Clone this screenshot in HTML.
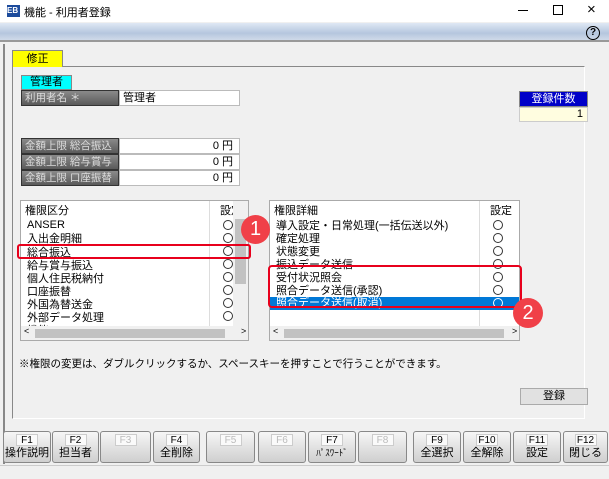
<!DOCTYPE html><html><head><meta charset="utf-8"><style>
*{box-sizing:border-box;margin:0;padding:0}
body{width:609px;height:479px;background:#f0f0f0;font-family:"Liberation Sans","Noto Sans CJK JP",sans-serif;font-size:11px;position:relative;overflow:hidden;color:#000}
.a{position:absolute}
.lbl{background:linear-gradient(#8a8a8a,#5a5a5a);color:#ddd;border:1px solid #333;padding-left:3px;line-height:14px;font-size:10.5px;white-space:nowrap;overflow:hidden}
.val{background:#fff;border:1px solid #bbb;line-height:14px;text-align:right;padding-right:6px}
.row{position:absolute;left:2px;height:13px;line-height:13px;font-size:11px;padding-left:4px;white-space:nowrap}
.fb{position:absolute;top:431px;height:32px;border:1px solid #888;border-radius:3px;background:linear-gradient(#f6f6f6,#cfcfcf);text-align:center;font-size:11px}
.fb i{display:block;font-style:normal;margin:2px auto 0;width:22px;height:12px;line-height:12px;background:#fafafa;border:1px solid #ccc;font-size:10px}
.fb b{font-weight:normal;display:block;line-height:14px}
.dis i{color:#bbb}
.o{position:absolute;width:10px;height:10px;border:1px solid #333;border-radius:50%}
</style></head><body>
<div class="a" style="left:0;top:0;width:609px;height:22px;background:#fff"></div>
<div class="a" style="left:7px;top:5px;width:13px;height:12px;background:#1c4b9c;color:#fff;font-size:8px;line-height:12px;font-weight:bold">EB</div>
<div class="a" style="left:24px;top:4px;font-size:11px">機能 - 利用者登録</div>
<div class="a" style="left:518px;top:10px;width:10px;height:1px;background:#000"></div>
<div class="a" style="left:553px;top:5px;width:10px;height:10px;border:1px solid #000"></div>
<div class="a" style="left:587px;top:1px;font-size:15px">×</div>
<div class="a" style="left:0;top:23px;width:609px;height:19px;background:linear-gradient(#dfe8f4,#b5c6de 60%,#cfdae9);border-bottom:2px solid #999"></div>
<div class="a" style="left:586px;top:26px;width:14px;height:14px;border:1.5px solid #000;border-radius:50%;font-size:10px;line-height:11px;text-align:center;font-weight:bold">?</div>
<div class="a" style="left:3px;top:44px;width:2px;height:420px;background:#888"></div>
<div class="a" style="left:12px;top:66px;width:573px;height:353px;border-top:1px solid #888;border-left:1px solid #888;border-right:1px solid #fff;border-bottom:1px solid #fff"></div>
<div class="a" style="left:12px;top:50px;width:51px;height:17px;background:#ff0;border:1px solid #888;border-bottom:none;text-align:center;line-height:16px">修正</div>
<div class="a" style="left:21px;top:75px;width:51px;height:15px;background:#0ff;border:1px solid #888;text-align:center;line-height:13px">管理者</div>
<div class="a lbl" style="left:21px;top:90px;width:98px;height:16px">利用者名 ＊</div>
<div class="a val" style="left:119px;top:90px;width:121px;height:16px;text-align:left;padding-left:3px">管理者</div>
<div class="a lbl" style="left:21px;top:138px;width:98px;height:16px">金額上限 総合振込</div>
<div class="a val" style="left:119px;top:138px;width:121px;height:16px">0 円</div>
<div class="a lbl" style="left:21px;top:154px;width:98px;height:16px">金額上限 給与賞与</div>
<div class="a val" style="left:119px;top:154px;width:121px;height:16px">0 円</div>
<div class="a lbl" style="left:21px;top:170px;width:98px;height:16px">金額上限 口座振替</div>
<div class="a val" style="left:119px;top:170px;width:121px;height:16px">0 円</div>
<div class="a" style="left:519px;top:91px;width:69px;height:16px;background:#0000c8;border:1px solid #888;color:#fff;text-align:center;line-height:14px">登録件数</div>
<div class="a" style="left:519px;top:107px;width:69px;height:15px;background:#fffde0;border:1px solid #ccc;text-align:right;padding-right:4px;line-height:13px">1</div>

<!-- left list -->
<div class="a" style="left:20px;top:200px;width:229px;height:141px;background:#fff;border:1px solid #aaa;overflow:hidden">
<div class="a" style="left:188px;top:0;width:1px;height:125px;background:#ddd"></div>
<div class="a" style="left:4px;top:1px">権限区分</div><div class="a" style="left:199px;top:1px">設定</div>
<div class="row" style="top:18px">ANSER</div>
<div class="row" style="top:32px">入出金明細</div>
<div class="row" style="top:46px">総合振込</div>
<div class="row" style="top:59px">給与賞与振込</div>
<div class="row" style="top:72px">個人住民税納付</div>
<div class="row" style="top:85px">口座振替</div>
<div class="row" style="top:98px">外国為替送金</div>
<div class="row" style="top:111px">外部データ処理</div>
<div class="row" style="top:124px">機能</div>
<div class="o" style="left:202px;top:19px"></div><div class="o" style="left:202px;top:32px"></div><div class="o" style="left:202px;top:45px"></div><div class="o" style="left:202px;top:58px"></div><div class="o" style="left:202px;top:71px"></div><div class="o" style="left:202px;top:84px"></div><div class="o" style="left:202px;top:97px"></div><div class="o" style="left:202px;top:110px"></div>
<div class="a" style="left:212px;top:0;width:15px;height:125px;background:#f0f0f0"></div>
<div class="a" style="left:214px;top:18px;width:11px;height:65px;background:#c2c2c2"></div>
<div class="a" style="left:0;top:125px;width:227px;height:14px;background:#f0f0f0"></div>
<div class="a" style="left:14px;top:128px;width:190px;height:9px;background:#c2c2c2"></div>
<div class="a" style="left:3px;top:125px;font-size:9px">&lt;</div><div class="a" style="left:220px;top:125px;font-size:9px">&gt;</div>
</div>

<!-- right list -->
<div class="a" style="left:269px;top:200px;width:251px;height:141px;background:#fff;border:1px solid #aaa;overflow:hidden">
<div class="a" style="left:209px;top:0;width:1px;height:125px;background:#ddd"></div>
<div class="a" style="left:4px;top:1px">権限詳細</div><div class="a" style="left:220px;top:1px">設定</div>
<div class="row" style="top:19px">導入設定・日常処理(一括伝送以外)</div>
<div class="row" style="top:32px">確定処理</div>
<div class="row" style="top:45px">状態変更</div>
<div class="row" style="top:58px">振込データ送信</div>
<div class="row" style="top:71px">受付状況照会</div>
<div class="row" style="top:84px">照合データ送信(承認)</div>
<div class="row" style="top:96px;left:0;width:249px;height:13px;background:#0078d7"></div>
<div class="row" style="top:96px;color:#fff">照合データ送信(取消)</div>
<div class="o" style="left:223px;top:19px"></div><div class="o" style="left:223px;top:32px"></div><div class="o" style="left:223px;top:45px"></div><div class="o" style="left:223px;top:58px"></div><div class="o" style="left:223px;top:71px"></div><div class="o" style="left:223px;top:84px"></div><div class="o" style="left:223px;top:97px;border-color:#fff"></div>
<div class="a" style="left:0;top:125px;width:249px;height:14px;background:#f0f0f0"></div>
<div class="a" style="left:14px;top:128px;width:220px;height:9px;background:#c2c2c2"></div>
<div class="a" style="left:3px;top:125px;font-size:9px">&lt;</div><div class="a" style="left:242px;top:125px;font-size:9px">&gt;</div>
</div>

<div class="a" style="left:17px;top:244px;width:234px;height:15px;border:2.5px solid #e8001c;border-radius:3px"></div>
<div class="a" style="left:268px;top:265px;width:254px;height:43px;border:2.5px solid #e8001c;border-radius:4px"></div>
<div class="a" style="left:241px;top:215px;width:29px;height:29px;border-radius:50%;background:#f04048;color:#fff;font-size:20px;text-align:center;line-height:29px">1</div>
<div class="a" style="left:513px;top:298px;width:30px;height:30px;border-radius:50%;background:#f04048;color:#fff;font-size:20px;text-align:center;line-height:30px">2</div>

<div class="a" style="left:19px;top:356px;font-size:10.5px">※権限の変更は、ダブルクリックするか、スペースキーを押すことで行うことができます。</div>
<div class="a" style="left:520px;top:388px;width:68px;height:17px;border:1px solid #aaa;background:#e1e1e1;text-align:center;line-height:15px">登録</div>

<div class="fb" style="left:3px;width:48px"><i>F1</i><b>操作説明</b></div>
<div class="fb" style="left:52px;width:47px"><i>F2</i><b>担当者</b></div>
<div class="fb dis" style="left:100px;width:51px"><i>F3</i></div>
<div class="fb" style="left:153px;width:47px"><i>F4</i><b>全削除</b></div>
<div class="fb dis" style="left:206px;width:49px"><i>F5</i></div>
<div class="fb dis" style="left:258px;width:48px"><i>F6</i></div>
<div class="fb" style="left:308px;width:48px"><i>F7</i><b style="font-size:9px">ﾊﾟｽﾜｰﾄﾞ</b></div>
<div class="fb dis" style="left:358px;width:49px"><i>F8</i></div>
<div class="fb" style="left:413px;width:48px"><i>F9</i><b>全選択</b></div>
<div class="fb" style="left:463px;width:48px"><i>F10</i><b>全解除</b></div>
<div class="fb" style="left:513px;width:48px"><i>F11</i><b>設定</b></div>
<div class="fb" style="left:563px;width:45px"><i>F12</i><b>閉じる</b></div>
<div class="a" style="left:0;top:465px;width:609px;height:14px;border-top:1px solid #ccc;background:#f0f0f0"></div>
</body></html>
